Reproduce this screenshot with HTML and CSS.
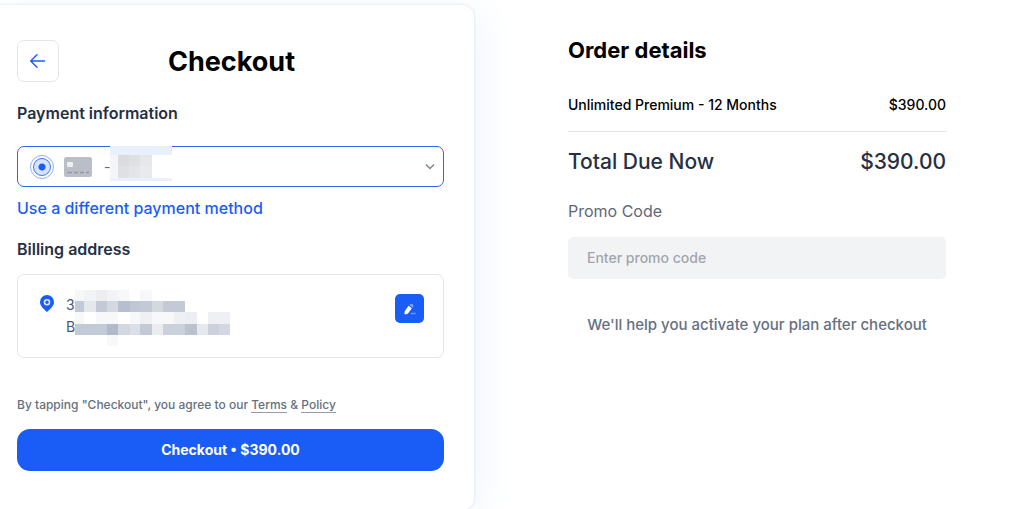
FILE: index.html
```html
<!DOCTYPE html>
<html lang="en">
<head>
<meta charset="utf-8">
<meta name="viewport" content="width=device-width, initial-scale=1">
<title>Checkout</title>
<link rel="stylesheet" href="styles.css">
</head>
<body>
<main class="page">
  <form class="card">
    <header class="card-header">
      <button class="back" type="button" aria-label="Back">
        <svg width="16" height="16" viewBox="0 0 16 16" fill="none" stroke="currentColor" stroke-width="1.4" stroke-linecap="round" stroke-linejoin="round"><path d="M14.500 8H.7M7 1.800L.7 8 7 14.200"/></svg>
      </button>
      <h1 class="title">Checkout</h1>
    </header>

    <h2 class="section-title">Payment information</h2>
    <div class="payment">
      <input class="radio" type="radio" name="method" aria-label="Saved card" checked>
      <svg class="card-icon" width="28" height="20" viewBox="0 0 28 20"><rect width="28" height="20" rx="2.500" fill="#bbbec7"/><rect x="3" y="5" width="6" height="5" rx="1" fill="#eeeff1"/><path d="M3 15.500h5M10 15.500h4M16 15.500h4M22 15.500h3" stroke="#9498a3" stroke-width="1.600"/></svg>
      <div class="picker">
        <select class="select" aria-label="Saved card"><option>-</option></select>
        <svg class="mask" width="62" height="35" viewBox="0 0 62 35" shape-rendering="crispEdges"><rect width="62" height="35" fill="#fff"/><rect width="62" height="9" fill="#e9f0fd"/><rect y="32" width="62" height="3" fill="#e9f1fd"/><rect y="9" width="8" height="23" fill="#f5f5f7"/><rect x="8" y="9" width="11" height="11" fill="#dbdce0"/><rect x="19" y="9" width="11" height="11" fill="#dfe0e3"/><rect x="30" y="9" width="12" height="11" fill="#e6e7e9"/><rect x="8" y="20" width="11" height="12" fill="#dfe0e3"/><rect x="19" y="20" width="11" height="12" fill="#e4e5e8"/><rect x="30" y="20" width="12" height="12" fill="#e9eaec"/></svg>
        <svg class="chevron" width="10" height="8" viewBox="0 0 10 8" fill="none" stroke="#7f8794" stroke-width="1.500"><path d="M1 1.500l4 4 4-4"/></svg>
      </div>
    </div>
    <a class="other-method" href="#">Use a different payment method</a>

    <h2 class="section-title billing-title">Billing address</h2>
    <div class="address">
      <svg class="pin" width="14" height="18" viewBox="0 0 14 18"><path d="M7 0a7 7 0 0 0-7 7c0 4.500 4 7 7 10 3-3 7-5.500 7-10a7 7 0 0 0-7-7z" fill="#1a5cf6"/><circle cx="7" cy="7.200" r="2.500" fill="none" stroke="#dfe8ff" stroke-width="1.600"/></svg>
      <div class="address-text">
        <span>3</span>
        <span>B</span>
        <svg class="address-mask" width="155" height="56" viewBox="0 0 155 56" shape-rendering="crispEdges">
          <path d="M0 0h9v11H0zM43 0h11v11H43zM77 0h0M116 0h0M65 0h12v11H65z" fill="#f6f7f9"/><path d="M9 0h12v11H9zM32 0h11v11H32z" fill="#f2f3f6"/><path d="M21 0h11v11H21z" fill="#ebedf1"/>
          <path d="M0 11h9v11H0zM21 11h11v11H21zM65 11h12v11H65zM88 11h22v11H88z" fill="#c3cad6"/>
          <path d="M9 11h12v11H9z" fill="#e4e8ed"/><path d="M32 11h11v11H32zM77 11h11v11H77z" fill="#d4d9e1"/><path d="M43 11h12v11H43z" fill="#b7bfcf"/><path d="M55 11h10v11H55z" fill="#c0c7d4"/>
          <path d="M0 22h9v12H0zM21 22h22v12H21zM55 22h10v12H55zM77 22h22v12H77z" fill="#f7f8fa"/><path d="M65 22h12v12H65zM99 22h11v12H99zM133 22h22v12h-22z" fill="#eef0f4"/><path d="M110 22h12v12h-12z" fill="#edeef2"/>
          <path d="M0 34h32v11H0zM65 34h12v11H65z" fill="#c3cad7"/><path d="M32 34h11v11H32z" fill="#b0bacb"/><path d="M43 34h12v11H43zM144 34h11v11h-11z" fill="#d2d7e1"/><path d="M55 34h10v11H55z" fill="#dbdfe8"/><path d="M77 34h11v11H77z" fill="#eaecef"/><path d="M88 34h22v11H88zM133 34h11v11h-11z" fill="#cad1dd"/><path d="M110 34h12v11h-12z" fill="#bbc2cf"/><path d="M122 34h11v11h-11z" fill="#e5e9ee"/><path d="M32 45h11v11H32z" fill="#f8f8fa"/>
        </svg>
      </div>
      <button class="edit" type="button" aria-label="Edit address">
        <svg width="14" height="14" viewBox="0 0 14 14"><path d="M5.600 3.800L8.800 6.200 5.400 11.100C4.800 12 2 12.700 1.700 12.300 1.300 12 1.500 9.600 2 8.800z" fill="#fff"/><path d="M6.400 2.900C7.300 1.400 8.500 1.300 9.700 2.300 10.900 3.200 10.800 4.200 9.600 5.400z" fill="#7fa2fb"/><path d="M8.200 11.500h4" stroke="#6d95fb" stroke-width="1.300" stroke-linecap="round"/></svg>
      </button>
    </div>

    <p class="terms">By tapping "Checkout", you agree to our <a class="term-link" href="#">Terms</a> &amp; <a class="term-link" href="#">Policy</a></p>
    <button class="submit" type="submit">Checkout • $390.00</button>
  </form>

  <section class="order">
    <h2 class="order-title">Order details</h2>
    <div class="line-item"><span>Unlimited Premium - 12 Months</span><span>$390.00</span></div>
    <div class="total"><span>Total Due Now</span><span>$390.00</span></div>
    <label class="promo-label" for="promo">Promo Code</label>
    <input class="promo" id="promo" type="text" placeholder="Enter promo code">
    <p class="help">We'll help you activate your plan after checkout</p>
  </section>
</main>
</body>
</html>
```
FILE: styles.css
```css
* {
  box-sizing: border-box;
}

body {
  margin: 0;
  background: #fff;
  color: #253043;
  font-family: Inter, "Liberation Sans", sans-serif;
  overflow-x: hidden;
}

h1,
h2,
p {
  margin: 0;
}

button,
input,
select {
  font-family: inherit;
}

.page {
  display: grid;
  grid-template-columns: 474fr 550fr;
  align-items: start;
  padding-top: 5px;
  overflow: hidden;
  min-height: 100vh;
}

.card {
  display: flex;
  flex-direction: column;
  padding: 35px 30px 39px 17px;
  border-radius: 0 12px 12px 0;
  background: #fff;
  box-shadow: 0 0 3px #d3e0f2, 8px 4px 40px #f0f5fc;
}

.card-header {
  display: grid;
  align-items: center;
}

.back {
  grid-area: 1 / 1;
  display: grid;
  place-items: center;
  width: 42px;
  height: 42px;
  padding: 0;
  border: 1px solid #e5e5e7;
  border-radius: 7px;
  background: #fff;
  color: #1a5cf6;
}

.title {
  grid-area: 1 / 1;
  justify-self: center;
  padding: 2px 0 0 2px;
  color: #000;
  font-size: 27px;
  font-weight: 700;
  line-height: 36px;
}

.section-title {
  margin-top: 19px;
  font-size: 16px;
  font-weight: 600;
  line-height: 24px;
}

.payment {
  display: flex;
  align-items: center;
  height: 41px;
  margin-top: 21px;
  padding-left: 15px;
  border: 1px solid #2b66ee;
  border-radius: 7px;
}

.radio {
  appearance: none;
  width: 18px;
  height: 18px;
  margin: 0;
  border: 1px solid #3c74f5;
  border-radius: 50%;
  outline: 1px solid #8eb0fb;
  outline-offset: 2px;
  background: radial-gradient(circle, #1a5cf6 3px, #d7e2fb 4px);
}

.card-icon {
  margin-left: 13px;
}

.picker {
  position: relative;
  display: flex;
  flex: 1;
  align-self: stretch;
  margin-left: 12px;
}

.select {
  appearance: none;
  flex: 1;
  padding: 0;
  border: 0;
  background: transparent;
  color: #5d6878;
  font-size: 14px;
}

.mask {
  position: absolute;
  top: -1px;
  left: 6px;
}

.chevron {
  position: absolute;
  top: 16px;
  right: 8px;
  pointer-events: none;
}

.other-method {
  align-self: flex-start;
  margin-top: 9px;
  color: #1a5cf6;
  font-size: 16px;
  font-weight: 500;
  line-height: 24px;
  text-decoration: none;
}

.billing-title {
  margin-top: 17px;
}

.address {
  display: flex;
  align-items: flex-start;
  min-height: 84px;
  margin-top: 13px;
  padding: 19px 19px 19px 22px;
  border: 1px solid #e6e6e8;
  border-radius: 7px;
}

.pin {
  margin-top: 1px;
}

.address-text {
  position: relative;
  display: flex;
  flex: 1;
  flex-direction: column;
  margin-left: 12px;
  color: #465878;
  font-size: 14px;
  line-height: 22px;
}

.address-mask {
  position: absolute;
  top: -4px;
  left: 9px;
}

.edit {
  display: grid;
  place-items: center;
  width: 29px;
  height: 29px;
  padding: 0;
  border: 0;
  border-radius: 5px;
  background: #1a5cf6;
}

.terms {
  margin-top: 37px;
  color: #667080;
  font-size: 12px;
  font-weight: 500;
  line-height: 20px;
}

.term-link {
  border-bottom: 1px solid #959ca8;
  color: inherit;
  text-decoration: none;
}

.submit {
  height: 42px;
  margin-top: 14px;
  padding-bottom: 3px;
  border: 0;
  border-radius: 13px;
  background: #1a5cf6;
  color: #fff;
  font-size: 14px;
  font-weight: 700;
}

.order {
  display: flex;
  flex-direction: column;
  padding: 31px 78px 30px 94px;
}

.order-title {
  color: #000;
  font-size: 22px;
  font-weight: 700;
  line-height: 28px;
}

.line-item,
.total {
  display: flex;
  justify-content: space-between;
}

.line-item {
  margin-top: 31px;
  padding-bottom: 16px;
  border-bottom: 1px solid #e2e2e4;
  color: #000;
  font-size: 14px;
  font-weight: 500;
  line-height: 20px;
}

.total {
  margin-top: 14px;
  font-size: 21px;
  font-weight: 500;
  line-height: 32px;
}

.promo-label {
  margin-top: 21px;
  color: #5f6877;
  font-size: 16px;
  line-height: 24px;
}

.promo {
  width: 100%;
  height: 42px;
  margin-top: 14px;
  padding: 0 19px 2px;
  border: 0;
  border-radius: 5px;
  background: #f2f3f5;
  font-size: 14px;
  font-weight: 500;
}

.promo::placeholder {
  color: #a1a5ae;
  opacity: 1;
}

.help {
  margin-top: 36px;
  color: #667080;
  font-size: 15px;
  font-weight: 500;
  line-height: 20px;
  text-align: center;
}
```
